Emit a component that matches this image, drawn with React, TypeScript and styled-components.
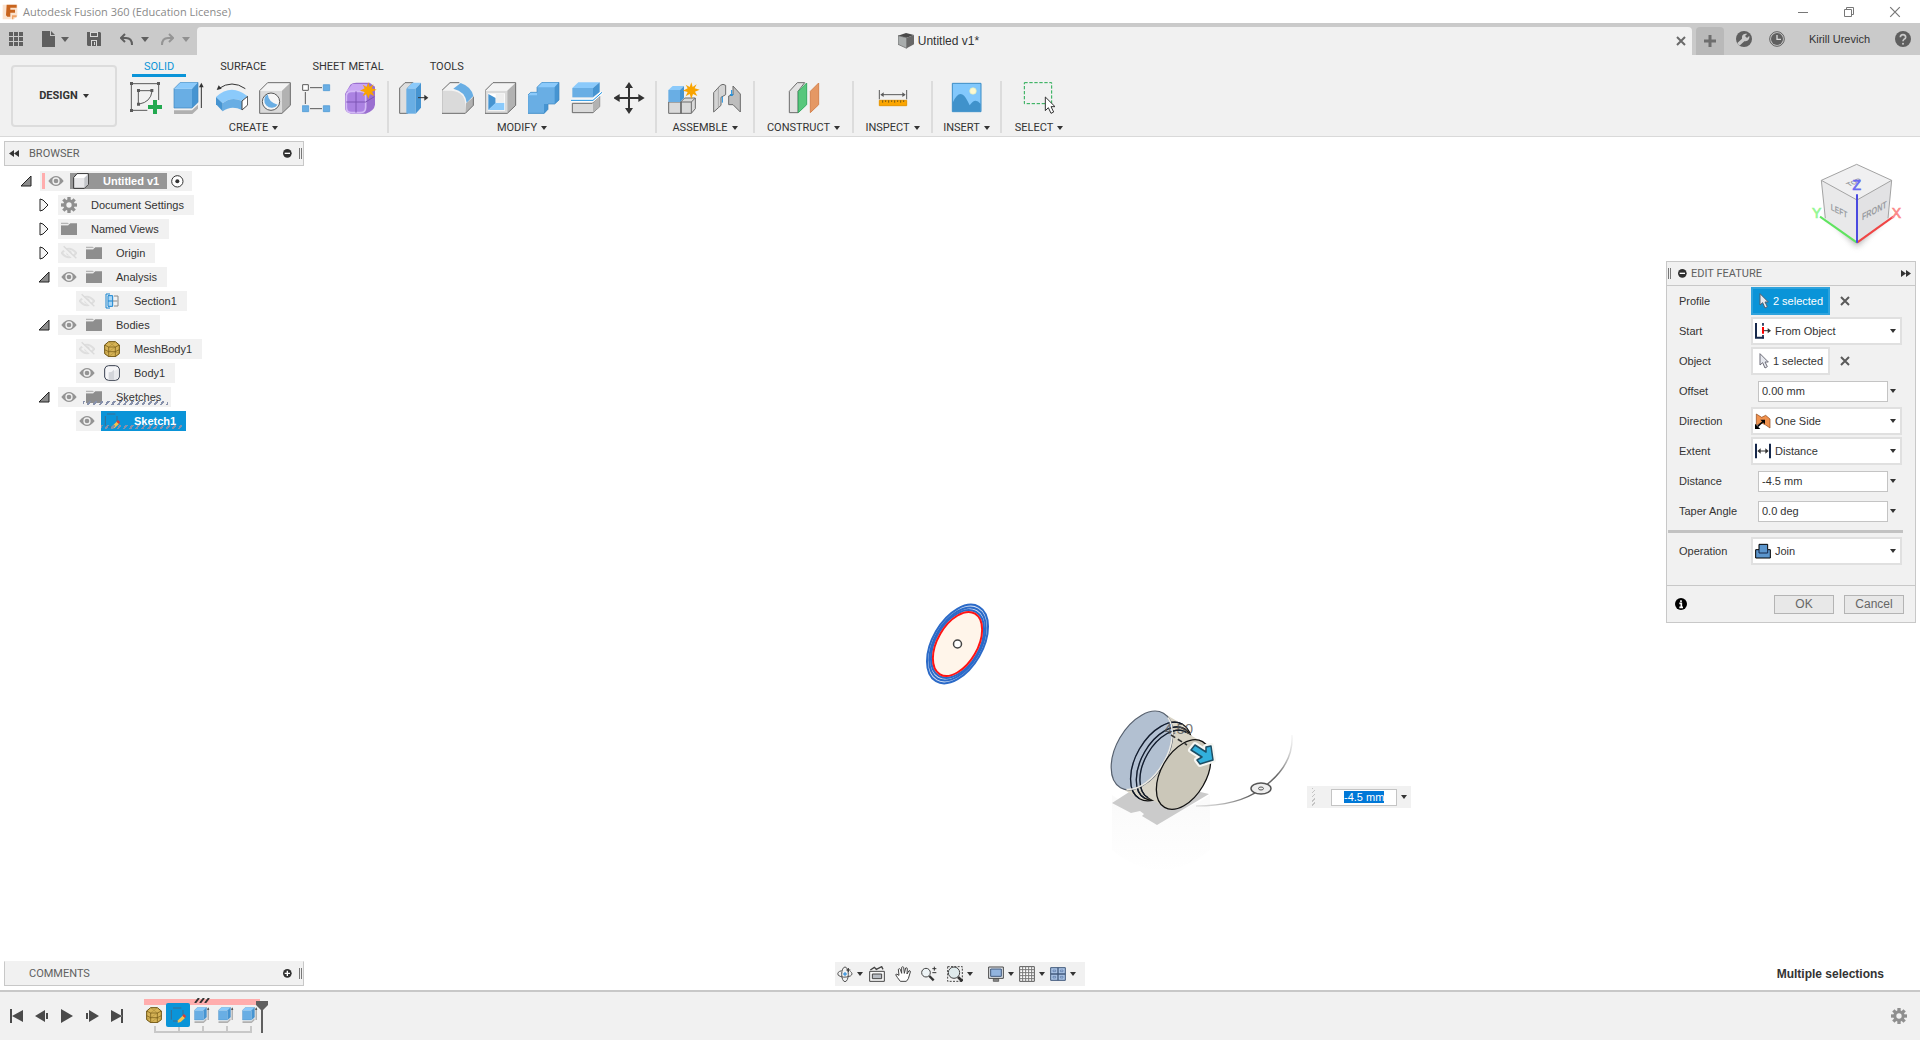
import React, { useEffect, useRef } from "react";
import styled, { createGlobalStyle, css } from "styled-components";

const GlobalStyle = createGlobalStyle`
  *, *::before, *::after { box-sizing: border-box; }
  body {
    margin: 0;
    background: #fff;
    color: #333;
    font-family: "Liberation Sans", Arial, sans-serif;
    font-size: 11px;
    line-height: 16px;
  }
  button, input, select {
    font: inherit;
    color: inherit;
    margin: 0;
  }
  button {
    display: inline-flex;
    align-items: center;
    justify-content: center;
    padding: 0;
    border: 0;
    background: none;
    cursor: pointer;
  }
  svg { display: block; flex: none; }
`;

const Page = styled.div`
  display: flex;
  flex-direction: column;
  min-height: 100vh;
`;

const Caret = styled.span<{ $tone?: string; $small?: boolean }>`
  display: inline-block;
  flex: none;
  border-style: solid;
  border-width: ${(p) => (p.$small ? "4px 3px 0" : "5px 4px 0")};
  border-color: ${(p) => p.$tone ?? "#333"} transparent transparent;
`;

/* ---------- Window title ---------- */

const TitleBar = styled.header`
  display: flex;
  align-items: center;
  height: 23px;
  padding: 0 2px;
  background: #fff;
`;

const AppTitle = styled.h1`
  flex: 1;
  margin: 0 0 0 5px;
  color: #8a8a8a;
  font: 400 11px/16px "Open Sans", "Noto Sans", sans-serif;
`;

const WindowButton = styled.button`
  width: 46px;
  height: 20px;
`;

/* ---------- Tab strip ---------- */

const TabStrip = styled.div`
  display: flex;
  align-items: flex-end;
  height: 32px;
  background: #cacaca;
`;

const QuickBar = styled.div`
  display: flex;
  align-items: center;
  width: 197px;
  height: 32px;
  padding: 0 7px 0 9px;
`;

const QuickButton = styled.button<{ $after: number }>`
  margin-right: ${(p) => p.$after}px;
`;

const DocumentTab = styled.div`
  display: flex;
  flex: 1;
  align-items: center;
  height: 28px;
  padding: 0 6px 0 4px;
  border-radius: 4px 4px 0 0;
  background: #f1f1f1;
`;

const DocumentName = styled.span`
  display: flex;
  flex: 1;
  gap: 4px;
  align-items: center;
  justify-content: center;
  font-size: 12px;
`;

const TabClose = styled.button`
  width: 10px;
  height: 16px;
`;

const NewTab = styled.button`
  width: 28px;
  height: 28px;
  margin: 0 12px 0 4px;
  border-radius: 4px 4px 0 0;
  background: #b9b9b9;
`;

const AccountBar = styled.div`
  display: flex;
  align-items: center;
  height: 32px;
  padding-right: 9px;
`;

const AccountButton = styled.button<{ $after?: number }>`
  margin-right: ${(p) => p.$after ?? 0}px;
`;

/* ---------- Ribbon ---------- */

const Ribbon = styled.div`
  display: flex;
  gap: 3px;
  height: 82px;
  padding-left: 11px;
  border-bottom: 1px solid #d9d9d9;
  background: #f1f1f1;
  font-family: Roboto, "Liberation Sans", sans-serif;
`;

const WorkspaceButton = styled.button`
  gap: 5px;
  width: 106px;
  height: 62px;
  margin-top: 10px;
  border: 2px solid #dcdcdc;
  border-radius: 4px;
  font-weight: 700;
`;

const RibbonMain = styled.div`
  flex: 1;
`;

const RibbonTabs = styled.nav`
  display: flex;
  gap: 22px;
  height: 22px;
  padding-left: 12px;
`;

const RibbonTab = styled.button<{ $active?: boolean }>`
  height: 22px;
  padding: 4px 12px 0;
  border-bottom: 3px solid ${(p) => (p.$active ? "#0a94d8" : "transparent")};
  color: ${(p) => (p.$active ? "#0a94d8" : "#333")};
`;

const ToolGroups = styled.div`
  display: flex;
  padding-top: 4px;
`;

const ToolGroup = styled.section<{ $width: number }>`
  display: flex;
  flex-direction: column;
  gap: 6px;
  align-items: center;
  width: ${(p) => p.$width}px;
  height: 52px;
  border-right: 2px solid #dcdcdc;
  &:last-child { border-right: 0; }
`;

const ToolIcons = styled.div`
  display: flex;
  gap: 11px;
  padding-top: 1px;
`;

const GroupLabel = styled.button`
  gap: 4px;
  height: 16px;
`;

/* ---------- Workspace ---------- */

const Workspace = styled.main`
  position: relative;
  display: flex;
  flex: 1;
  flex-direction: column;
  justify-content: space-between;
  padding: 4px;
`;

const Scene = styled.svg`
  position: absolute;
  inset: 0;
  width: 100%;
  height: 100%;
`;

const UpperArea = styled.div`
  position: relative;
  display: flex;
  justify-content: space-between;
  align-items: flex-start;
  pointer-events: none;
  > * { pointer-events: auto; }
`;

const LowerArea = styled.div`
  position: relative;
  display: grid;
  grid-template-columns: 1fr auto 1fr;
  align-items: end;
`;

const SidePanel = styled.aside`
  width: 300px;
`;

const PanelBar = styled.div<{ $indent: number; $open?: boolean }>`
  display: flex;
  align-items: center;
  width: 300px;
  height: 25px;
  padding: 0 1px 0 ${(p) => p.$indent}px;
  border: 1px solid #c8c8c8;
  ${(p) => p.$open && css`border-top-color: #f1f1f1;`}
  background: #f1f1f1;
`;

const PanelTitle = styled.h2<{ $before?: number }>`
  flex: 1;
  margin: 0 0 0 ${(p) => p.$before ?? 0}px;
  color: #606060;
  font: 400 11px/16px Roboto, "Liberation Sans", sans-serif;
`;

const Grip = styled.span`
  width: 3px;
  height: 11px;
  margin-left: 7px;
  border: solid #777;
  border-width: 0 1px;
`;

const Tree = styled.ul`
  display: flex;
  flex-direction: column;
  gap: 4px;
  margin: 5px 0 0;
  padding: 0;
  list-style: none;
`;

const TreeRow = styled.li<{ $indent: number }>`
  display: flex;
  align-items: center;
  height: 20px;
  padding-left: ${(p) => p.$indent}px;
`;

const TreeToggle = styled.button`
  width: 20px;
  height: 16px;
  justify-content: flex-start;
`;

const TreeLabel = styled.span<{ $hatched?: boolean; $selected?: boolean }>`
  position: relative;
  display: flex;
  align-items: center;
  height: 20px;
  padding: 0 10px 0 3px;
  background: ${(p) => (p.$selected ? "#0a94d8" : "#f1f1f1")};
  ${(p) =>
    p.$selected &&
    css`
      color: #fff;
      font-weight: 700;
    `}
  ${(p) =>
    p.$hatched &&
    css`
      &::after {
        content: "";
        position: absolute;
        right: 3px;
        bottom: 2px;
        left: 0;
        height: 4px;
        background: repeating-linear-gradient(125deg, #8791ab 0 2px, transparent 2px 5px);
      }
    `}
`;

const VisibilityCell = styled.button`
  width: 25px;
  height: 20px;
  padding: 0 6px 0 3px;
  background: #f1f1f1;
`;

const TreeIcon = styled.span`
  width: 16px;
  margin-right: 14px;
`;

const RootRow = styled.span`
  display: flex;
  align-items: center;
  height: 20px;
  padding: 0 8px 0 2px;
  background: #f1f1f1;
`;

const ActiveMark = styled.span`
  width: 3px;
  height: 16px;
  background: #ffadad;
`;

const RootName = styled.span`
  display: flex;
  align-items: center;
  height: 16px;
  margin-right: 4px;
  padding: 0 8px 0 3px;
  background: #969696;
  color: #fff;
  font-weight: 700;
`;

/* ---------- Edit feature dialog ---------- */

const Dock = styled.div`
  display: flex;
  flex-direction: column;
  align-items: flex-end;
  gap: 8px;
  padding-top: 19px;
`;

const CubeHolder = styled.div`
  margin-right: 9px;
`;

const Dialog = styled.section`
  width: 250px;
  border: 1px solid #c8c8c8;
  background: #f1f1f1;
`;

const DialogHeader = styled.div`
  display: flex;
  align-items: center;
  height: 24px;
  padding: 0 4px 0 1px;
  border-bottom: 1px solid #c8c8c8;
`;

const DialogGrip = styled(Grip)`
  margin: 0 7px 0 0;
`;

const Field = styled.div`
  display: grid;
  grid-template-columns: 72px 151px;
  align-items: center;
  height: 30px;
  padding-left: 12px;
`;

const FieldLine = styled.div`
  display: flex;
  align-items: center;
`;

const SelectBox = styled.span`
  display: grid;
  align-items: center;
  height: 28px;
  border: 2px solid #e0e0e0;
  background: #fff;
  > * { grid-area: 1 / 1; }
  > svg { margin-left: 2px; pointer-events: none; }
  > ${Caret} { justify-self: end; margin-right: 4px; pointer-events: none; }
`;

const Select = styled.select`
  width: 100%;
  height: 24px;
  padding: 0 16px 0 22px;
  border: 0;
  background: transparent;
  appearance: none;
`;

const PickButton = styled.button<{ $active?: boolean }>`
  gap: 3px;
  width: 79px;
  height: 28px;
  border: 2px solid ${(p) => (p.$active ? "#2fa3dd" : "#e0e0e0")};
  background: ${(p) => (p.$active ? "#0a94d8" : "#fff")};
  color: ${(p) => (p.$active ? "#fff" : "#333")};
`;

const ClearButton = styled.button`
  width: 16px;
  height: 16px;
  margin-left: 7px;
`;

const ValueInput = styled.input`
  width: 130px;
  height: 21px;
  margin: 0 2px 0 7px;
  padding: 0 3px;
  border: 1px solid #c4c4c4;
  background: #fff;
`;

const Divider = styled.hr`
  height: 3px;
  margin: 4px 12px 3px 1px;
  border: 0;
  background: #c2c2c2;
`;

const DialogFooter = styled.div`
  display: flex;
  gap: 10px;
  align-items: center;
  height: 37px;
  margin-top: 19px;
  padding: 0 11px 0 8px;
  border-top: 1px solid #c8c8c8;
`;

const InfoButton = styled.button`
  margin-right: auto;
`;

const DialogButton = styled.button`
  width: 60px;
  height: 19px;
  border: 1px solid #b4b4b4;
  background: #e8e8e8;
  color: #666;
  font-size: 12px;
`;

/* ---------- Floating value box ---------- */

const FloatingValue = styled.div`
  position: absolute;
  top: 649px;
  left: 1307px;
  display: flex;
  align-items: center;
  height: 22px;
  padding: 0 4px 0 5px;
  background: #f1f1f1;
`;

const DotGrip = styled.span`
  width: 3px;
  height: 18px;
  margin-right: 16px;
  background: repeating-linear-gradient(135deg, #c4c4c4 0 1px, transparent 1px 3px);
`;

const FloatingInput = styled.input`
  width: 66px;
  height: 17px;
  margin-right: 4px;
  padding: 0 0 0 12px;
  border: 1px solid #c4c4c4;
  outline: 0;
  background: #fff;
  line-height: 14px;
  &::selection { background: #0078d7; color: #fff; }
`;

/* ---------- Bottom bars ---------- */

const NavBar = styled.div`
  display: flex;
  align-items: center;
  height: 24px;
  padding: 0 9px 0 2px;
  background: #f1f1f1;
`;

const NavButton = styled.button<{ $after: number }>`
  gap: 4px;
  margin-right: ${(p) => p.$after}px;
`;

const Status = styled.p`
  justify-self: end;
  margin: 0 32px 4px 0;
  font-size: 12px;
  font-weight: 700;
`;

const Timeline = styled.footer`
  display: flex;
  align-items: center;
  height: 50px;
  padding-right: 13px;
  border-top: 2px solid #c8c8c8;
  background: #f1f1f1;
`;

const Playback = styled.div`
  display: flex;
  gap: 9px;
  padding-left: 9px;
`;

const PlayButton = styled.button`
  width: 16px;
  height: 16px;
`;

const Track = styled.div`
  position: relative;
  flex: 1;
  height: 48px;
  margin-left: 17px;
  padding-top: 11px;
`;

const GroupBar = styled.span`
  position: absolute;
  top: 7px;
  left: 2px;
  width: 116px;
  height: 6px;
  background: #ffadad;
`;

const Steps = styled.ol`
  position: relative;
  display: flex;
  margin: 0;
  padding: 0;
  list-style: none;
`;

const Step = styled.li<{ $selected?: boolean }>`
  display: flex;
  align-items: center;
  justify-content: center;
  width: 24px;
  height: 24px;
  border-radius: 2px;
  background: ${(p) => (p.$selected ? "#0a94d8" : "transparent")};
`;

const Bracket = styled.svg`
  margin: -1px 0 0 12px;
`;

const Marker = styled.svg`
  position: absolute;
  top: 9px;
  left: 114px;
`;

const Slashes = styled.svg`
  position: absolute;
  top: 6px;
  left: 52px;
`;

/* ---------- Drawings ---------- */

const ink = "#5a5a5a";

const Icon = ({ box, size, children }: { box: number; size: number; children: React.ReactNode }) => (
  <svg width={size} height={size} viewBox={`0 0 ${box} ${box}`} fill="none" aria-hidden="true">
    {children}
  </svg>
);

const Tool = ({ children }: { children: React.ReactNode }) => (
  <Icon box={96} size={32}>{children}</Icon>
);

const Star = ({ x, y }: { x: number; y: number }) => (
  <path
    transform={`translate(${x} ${y})`}
    fill="#f9a400"
    d="M0-25 4-11 16-19 10-7 25-3 11 3 18 16 5 10 0 24-5 10-17 17-11 4-25 0-11-7-17-18-5-11Z"
  />
);

const CreateSketchIcon = () => (
  <Tool>
    <path d="M4 5H86V54M4 5V85H52" stroke={ink} strokeWidth="3" />
    <path d="M25 26H66M25 26V66M66 28Q62 60 28 66" stroke={ink} strokeWidth="3" />
    <path d="M0 0h9v9H0zM81 0h9v9h-9zM0 81h9v9H0zM21 21h9v9h-9zM61 21h9v9h-9zM21 62h9v9h-9z" fill={ink} />
    <path d="M69 54h12v15h15v12H81v15H69V81H54V69h15Z" fill="#22a94f" />
  </Tool>
);

const ExtrudeShape = () => (
  <>
    <path d="M3 85H57L75 68V80L58 96H3Z" fill="#b0b0b0" />
    <path d="M3 20H57V78H3Z" fill="#69aee4" />
    <path d="M3 20 22 1H75L57 20Z" fill="#8bcafb" />
    <path d="M57 20 75 1V61L57 78Z" fill="#4694d1" />
    <path d="M3 20 22 1H75V61L57 78H3Z" stroke="#3d86c0" strokeWidth="2" />
    <path d="M85 78V12" stroke="#333" strokeWidth="3" />
    <path d="M78 16 85 2 92 16Z" fill="#333" />
  </>
);

const ExtrudeIcon = () => <Tool><ExtrudeShape /></Tool>;

const RevolveIcon = () => (
  <Tool>
    <path d="M8 20Q48-8 88 20" stroke="#333" strokeWidth="3" />
    <path d="M2 24 8 10 17 20Z" fill="#333" />
    <path d="M0 45Q46 3 95 43L78 57Q46 42 20 64Z" fill="#8bcafb" />
    <path d="M20 64Q46 42 78 57V84Q46 68 20 88Z" fill="#69aee4" />
    <path d="M0 45 20 64V88L0 67Z" fill="#4694d1" />
    <path d="M78 57 95 43V69L78 84Z" fill="#fff" stroke="#444" strokeWidth="3" />
  </Tool>
);

const GreyBox = () => (
  <>
    <path d="M2 26H69V94H2Z" fill="#dadada" />
    <path d="M2 26 26 2H94L69 26Z" fill="#f3f3f3" />
    <path d="M69 26 94 2V70L69 94Z" fill="#b2b2b2" />
    <path d="M2 26 26 2H94V70L69 94H2Z" stroke="#6b6b6b" strokeWidth="3" />
  </>
);

const HoleIcon = () => (
  <Tool>
    <GreyBox />
    <circle cx="36" cy="59" r="26" fill="#f6f6f6" stroke={ink} strokeWidth="3" />
    <path d="M26 37Q29 62 56 68A22 22 0 1 1 26 37Z" fill="#69aee4" />
  </Tool>
);

const PatternIcon = () => (
  <Tool>
    <path d="M24 17H60M10 30V66M24 80H60" stroke={ink} strokeWidth="3" />
    <path d="M2 8h17v17H2z" fill="#fff" stroke={ink} strokeWidth="3" />
    <path d="M64 8h19v18H64zM1 71h19v18H1zM64 71h19v18H64z" fill="#69aee4" stroke="#4694d1" strokeWidth="2" />
  </Tool>
);

const FormIcon = () => (
  <Tool>
    <path d="M0 36 16 8Q22 2 34 2H74L90 14V68Q88 86 62 95H18Q0 92 0 76Z" fill="#9a6fd0" />
    <path d="M4 28 22 6H68L60 26Z" fill="#c9a6f3" />
    <path d="M4 42Q4 28 20 28H46Q62 28 62 42V76Q62 92 46 92H20Q4 92 4 76Z" fill="#ab82e2" stroke="#d3b9f6" strokeWidth="5" />
    <path d="M33 28V92M4 60H62L88 44" stroke="#7c55b4" strokeWidth="3" />
    <Star x={70} y={26} />
  </Tool>
);

const PressPullIcon = () => (
  <Tool>
    <path d="M2 18 18 2H42L26 18V94H2Z" fill="#dedede" stroke="#6b6b6b" strokeWidth="3" />
    <path d="M22 20 40 2H65L50 20Z" fill="#8bcafb" />
    <path d="M22 20H50V95H22Z" fill="#69aee4" />
    <path d="M50 20 66 2V77L50 95Z" fill="#4694d1" />
    <path d="M57 47H80" stroke="#333" strokeWidth="3" />
    <path d="M76 38 88 47 76 56Z" fill="#333" />
  </Tool>
);

const FilletIcon = () => (
  <Tool>
    <path d="M-1 26 24 2H45Q60 4 72 16L94 40V70L70 94H-1Z" fill="#f3f3f3" />
    <path d="M-1 26H28Q68 30 70 66V94H-1Z" fill="#dadada" />
    <path d="M72 64 94 46V70L70 94Z" fill="#b2b2b2" />
    <path d="M34 20 56 3Q88 14 94 42L74 62Q70 28 34 20Z" fill="#69aee4" />
    <path d="M-1 94V26L24 2H52M94 44V70L70 94H-1" stroke="#6b6b6b" strokeWidth="3" />
  </Tool>
);

const ShellIcon = () => (
  <Tool>
    <g transform="translate(-2 0)">
      <GreyBox />
      <path d="M10 34H62V86H10Z" fill="#fff" />
      <path d="M12 36 34 48V64L12 84Z" fill="#4694d1" />
      <path d="M12 84 34 62H60V84Z" fill="#8bcafb" />
      <path d="M34 36H60V62H34Z" fill="#efefef" />
    </g>
  </Tool>
);

const CombineIcon = () => (
  <Tool>
    <path d="M-2 40 8 31H27V16L42 1H93V54L80 66H60V82L48 95H-2Z" fill="#69aee4" />
    <path d="M-2 40 8 31H27V40ZM27 16 42 1H93L80 16Z" fill="#8bcafb" />
    <path d="M80 16 93 1V54L80 66ZM48 66H60V82L48 95Z" fill="#4694d1" />
    <path d="M-1 40 8 31H27V16L42 1H93V54L80 66H60V82L48 94H-1Z" stroke="#3d86c0" strokeWidth="2" />
  </Tool>
);

const SplitIcon = () => (
  <Tool>
    <path d="M4 64H64L86 42V74L66 92H4Z" fill="#dadada" stroke="#6b6b6b" strokeWidth="3" />
    <path d="M66 64 86 44V74L66 92Z" fill="#b2b2b2" />
    <path d="M4 18H66V46H4Z" fill="#69aee4" />
    <path d="M4 18 22 1H86L66 18Z" fill="#8bcafb" />
    <path d="M66 18 86 1V30L66 46Z" fill="#4694d1" />
    <path d="M-3 55H66L93 31" stroke="#fff" strokeWidth="9" />
    <path d="M-3 55H66L93 31" stroke="#168ee0" strokeWidth="3" />
  </Tool>
);

const MoveIcon = () => (
  <Tool>
    <path d="M45 12V84M10 48H80" stroke="#333" strokeWidth="6" />
    <path d="M33 18 45 0 57 18ZM33 78 45 96 57 78ZM17 36-2 48 17 60ZM73 36 92 48 73 60Z" fill="#333" />
  </Tool>
);

const NewComponentIcon = () => (
  <Tool>
    <path d="M2 60H40V94H2ZM38 60 50 48H82V80L70 94H38Z" fill="#dadada" stroke="#6b6b6b" strokeWidth="3" />
    <path d="M38 60H70V94M70 60 82 48" stroke="#6b6b6b" strokeWidth="3" />
    <path d="M1 24 14 12H48L36 24Z" fill="#8bcafb" />
    <path d="M1 24H36V60H1Z" fill="#69aee4" />
    <path d="M36 24 48 12V48L36 60Z" fill="#4694d1" />
    <Star x={70} y={26} />
  </Tool>
);

const JointIcon = () => (
  <Tool>
    <path d="M8 32 28 10Q36 4 44 10V38L30 46V70L8 90Z" fill="#d4d4d4" stroke="#6b6b6b" strokeWidth="3" />
    <path d="M22 18V76" stroke="#aaa" strokeWidth="3" />
    <path d="M66 12 88 36V90L66 68H53V42L66 38Z" fill="#bdbdbd" stroke="#6b6b6b" strokeWidth="3" />
    <path d="M34 44V62M62 24V42M57 36 62 42 67 36" stroke="#168ee0" strokeWidth="3" />
  </Tool>
);

const ConstructIcon = () => (
  <Tool>
    <path d="M4 28 28 2H50L30 28V92H4Z" fill="#e2e2e2" stroke="#6b6b6b" strokeWidth="3" />
    <path d="M31 28 56 3V68L31 92Z" fill="#58c77c" stroke="#36ab62" strokeWidth="3" />
    <path d="M67 28 92 3V68L67 92Z" fill="#e59864" stroke="#d58450" strokeWidth="3" />
  </Tool>
);

const MeasureIcon = () => (
  <Tool>
    <path d="M7 24V52M89 24V52M14 38H82" stroke={ink} strokeWidth="3" />
    <path d="M10 38 20 31V45ZM86 38 76 31V45Z" fill={ink} />
    <path d="M7 55H89V71H7Z" fill="#fba500" stroke="#e59500" strokeWidth="3" />
    <path d="M17 55v7M26 55v5M35 55v7M44 55v5M53 55v7M62 55v5M71 55v7M80 55v5" stroke="#7a5a10" strokeWidth="3" />
  </Tool>
);

const InsertIcon = () => (
  <Tool>
    <path d="M4 4H90V89H4Z" fill="#82c8fc" stroke="#3b8dc6" strokeWidth="3" />
    <path d="M5 62Q28 12 50 58L56 70Q72 44 89 66V88H5Z" fill="#4092cb" />
    <circle cx="66" cy="27" r="10" fill="#fdf8cf" stroke="#d5e8c0" strokeWidth="2" />
  </Tool>
);

const SelectIcon = () => (
  <Tool>
    <path d="M4 2H86V65H4Z" stroke="#22a94f" strokeWidth="3" strokeDasharray="10 5" />
    <path d="M67 45V86L76 77 84 94 92 90 84 74H96Z" fill="#fff" stroke="#333" strokeWidth="3" />
  </Tool>
);

const AppLogo = () => (
  <Icon box={48} size={16}>
    <path d="M2 2H46V36L36 46H2Z" fill="#fbe3cf" />
    <path d="M14 2H44V11H25V17H39V26H25V38H16L12 34Z" fill="#c8641e" />
    <path d="M30 34H44V40H34V46H30Z" fill="#f0a468" />
  </Icon>
);

const GridIcon = () => (
  <Icon box={14} size={14}>
    <path d="M0 0h4v4H0zM5 0h4v4H5zM10 0h4v4h-4zM0 5h4v4H0zM5 5h4v4H5zM10 5h4v4h-4zM0 10h4v4H0zM5 10h4v4H5zM10 10h4v4h-4z" fill="#5f5f5f" />
  </Icon>
);

const FileIcon = () => (
  <svg width="13" height="16" viewBox="0 0 13 16" aria-hidden="true">
    <path d="M0 0H8V5H13V16H0ZM9 0 13 4H9Z" fill="#5f5f5f" />
  </svg>
);

const SaveIcon = () => (
  <Icon box={14} size={14}>
    <path d="M0 0H13L14 1V14H1L0 13Z" fill="#5f5f5f" />
    <path d="M3 0H11V5H3ZM4 8H10V14H4Z" fill="#d8d8d8" />
    <path d="M4 1H10V4H4ZM5 9H9V14H5Z" fill="#5f5f5f" />
    <path d="M7 10H8V13H7Z" fill="#d8d8d8" />
  </Icon>
);

const UndoIcon = ({ flip }: { flip?: boolean }) => (
  <svg width="13" height="13" viewBox="0 0 13 13" fill="none" aria-hidden="true">
    <g transform={flip ? "matrix(-1 0 0 1 13 0)" : undefined} stroke={flip ? "#959595" : "#5f5f5f"} strokeWidth="2">
      <path d="M5 1 1 5 5 9M1 5H6Q12 5 12 12" />
    </g>
  </svg>
);

const DocumentIcon = () => (
  <Icon box={48} size={16}>
    <path d="M0 8 24 0 48 6 26 14Z" fill="#4a4a4a" />
    <path d="M0 8 26 14V46L0 34Z" fill="#a9adad" stroke="#5d5d5d" strokeWidth="2" />
    <path d="M26 14 48 6V34L26 46Z" fill="#686868" />
  </Icon>
);

const Cross = ({ size, width, color }: { size: number; width: number; color: string }) => (
  <Icon box={10} size={size}>
    <path d="M1 1 9 9M9 1 1 9" stroke={color} strokeWidth={width} />
  </Icon>
);

const PlusIcon = () => (
  <Icon box={14} size={14}><path d="M7 1V13M1 7H13" stroke="#6e6e6e" strokeWidth="3" /></Icon>
);

const WrenchIcon = () => (
  <Icon box={48} size={16}>
    <circle cx="24" cy="24" r="24" fill="#5f5f5f" />
    <path d="M8 42 4 36 18 23Q16 10 28 8L34 8 27 15 33 21 40 14Q42 28 28 31H25L12 43Z" fill="#cacaca" />
  </Icon>
);

const ClockIcon = () => (
  <Icon box={48} size={16}>
    <circle cx="24" cy="24" r="22" stroke="#5f5f5f" strokeWidth="3" />
    <circle cx="24" cy="24" r="18" fill="#5f5f5f" />
    <path d="M24 12V25H36" stroke="#d8d8d8" strokeWidth="4" />
  </Icon>
);

const HelpIcon = () => (
  <Icon box={48} size={16}>
    <circle cx="24" cy="24" r="24" fill="#5f5f5f" />
    <path d="M16 19Q16 11 24 11T32 19Q32 23 27 25Q24 27 24 31" stroke="#cacaca" strokeWidth="5" />
    <circle cx="24" cy="38" r="3" fill="#cacaca" />
  </Icon>
);

const DoubleArrow = ({ back }: { back?: boolean }) => (
  <svg width="10" height="7" viewBox="0 0 20 14" aria-hidden="true">
    <path d={back ? "M10 0V14L0 7ZM20 0V14L10 7Z" : "M0 0 10 7 0 14ZM10 0 20 7 10 14Z"} fill="#333" />
  </svg>
);

const RoundSign = ({ plus }: { plus?: boolean }) => (
  <Icon box={27} size={9}>
    <circle cx="13" cy="13" r="13" fill="#2f2f2f" />
    <path d={plus ? "M5 13H21M13 5V21" : "M5 13H21"} stroke="#fff" strokeWidth="4" />
  </Icon>
);

const EyeIcon = () => (
  <Icon box={48} size={16}>
    <path d="M1 24Q24-6 47 24Q24 54 1 24Z" fill="#949494" />
    <circle cx="24" cy="24" r="9" stroke="#f1f1f1" strokeWidth="4" />
  </Icon>
);

const EyeOffIcon = () => (
  <Icon box={48} size={16}>
    <path d="M2 24Q24-2 46 24Q24 50 2 24Z" stroke="#dedede" strokeWidth="6" />
    <circle cx="24" cy="24" r="8" fill="#dedede" />
    <path d="M4 6 42 42" stroke="#f1f1f1" strokeWidth="9" />
    <path d="M8 4 46 40" stroke="#dadada" strokeWidth="4" />
  </Icon>
);

const GearIcon = () => (
  <Icon box={48} size={16}>
    <g fill="#8f8f8f">
      {[0, 45, 90, 135].map((a) => (
        <rect key={a} x="19" y="0" width="10" height="48" transform={`rotate(${a} 24 24)`} />
      ))}
      <circle cx="24" cy="24" r="17" />
    </g>
    <circle cx="24" cy="24" r="8" fill="#f1f1f1" />
  </Icon>
);

const FolderIcon = () => (
  <Icon box={48} size={16}>
    <path d="M0 5H20L24 9H0Z" fill="#b5b5b5" />
    <path d="M0 12H22L28 7H48V42H0Z" fill="#8e8e8e" />
    <path d="M0 13H22" stroke="#d5d5d5" strokeWidth="2" />
  </Icon>
);

const RootCubeIcon = () => (
  <Icon box={48} size={16}>
    <path d="M2 14 12 2H46V34L34 46H2Z" fill="#e8e8ea" stroke="#333" strokeWidth="3" strokeLinejoin="round" />
    <path d="M3 15 13 4H44L34 15Z" fill="#fff" />
    <path d="M34 15 44 5V34L34 44Z" fill="#c4c6ca" />
  </Icon>
);

const SectionIcon = () => (
  <Icon box={48} size={16}>
    <path d="M18 3H6V45H18" stroke="#1583d0" strokeWidth="3" />
    <path d="M12 8H26V40H12Z" fill="#a9d6f6" stroke="#1583d0" strokeWidth="3" />
    <path d="M12 24H26" stroke="#1583d0" strokeWidth="3" />
    <path d="M26 24H40M30 9H42V39H30" stroke="#8a8a8a" strokeWidth="3" />
  </Icon>
);

const MeshIcon = () => (
  <Icon box={48} size={16}>
    <path d="M2 12 14 2H34L46 12V38L34 47H14L2 38Z" fill="#d6b356" stroke="#6c5210" strokeWidth="3" />
    <path d="M2 12 14 18H34L46 12M14 18V47M34 18V47M2 26 14 32H34L46 26" stroke="#6c5210" strokeWidth="2" />
    <path d="M14 2 34 18M34 2 14 18M14 32 34 18M14 47 34 32M2 38 14 32M46 38 34 32" stroke="#8d6f22" strokeWidth="1" />
  </Icon>
);

const BodyIcon = () => (
  <Icon box={48} size={16}>
    <path d="M2 12Q4 2 14 2H34Q44 2 46 12V36Q44 46 34 46H14Q4 46 2 36Z" fill="#f6f6f8" stroke="#3a4150" strokeWidth="3" />
    <path d="M14 22Q24 22 30 14V44H14Z" fill="#d3d5da" />
    <path d="M30 18Q38 16 44 10V36Q40 44 30 44Z" fill="#e9eaed" />
  </Icon>
);

const SketchIcon = () => (
  <Icon box={48} size={16}>
    <path d="M9 3H34M39 9V24M4 9V38M9 42H24" stroke="#3d6c90" strokeWidth="3" />
    <path d="M24 40 38 26 45 33 32 45 23 47Z" fill="#f6c24c" />
    <path d="M37 26 42 21 48 27 45 33Z" fill="#e23b2e" />
  </Icon>
);

const SmallExtrude = () => (
  <svg width="16" height="16" viewBox="0 0 96 96" fill="none" aria-hidden="true"><ExtrudeShape /></svg>
);

const OpenToggle = () => (
  <svg width="12" height="12" viewBox="0 0 12 12" aria-hidden="true">
    <path d="M1 11 11 1V11Z" fill="#8c8c8c" stroke="#222" strokeWidth="1" />
  </svg>
);

const ClosedToggle = () => (
  <svg width="12" height="14" viewBox="0 0 12 14" aria-hidden="true">
    <path d="M2 1V13L5 12 10 7 5 2Z" fill="#f4f4f4" stroke="#222" strokeWidth="1" />
  </svg>
);

const RadioMark = () => (
  <Icon box={39} size={13}>
    <circle cx="19" cy="19" r="17" fill="#fff" stroke="#333" strokeWidth="3" />
    <circle cx="19" cy="19" r="6" fill="#333" />
  </Icon>
);

const PointerIcon = ({ light }: { light?: boolean }) => (
  <svg width="12" height="16" viewBox="0 0 36 48" aria-hidden="true">
    <path d="M6 2V36L14 29 21 45 28 41 21 27H31Z" fill="#e6e8ee" stroke={light ? "#53606f" : "#6d6d78"} strokeWidth="3" />
  </svg>
);

const FromObjectIcon = () => (
  <Icon box={48} size={16}>
    <path d="M3 0V44H27" stroke="#16284b" strokeWidth="6" />
    <path d="M24 0V8M24 36V46" stroke="#16284b" strokeWidth="5" />
    <path d="M24 12V32" stroke="#f00" strokeWidth="6" />
    <path d="M26 23H40" stroke="#333" strokeWidth="3" />
    <path d="M38 15 48 23 38 31Z" fill="#333" />
  </Icon>
);

const OneSideIcon = () => (
  <Icon box={48} size={16}>
    <path d="M4 3 20 13 32 7 45 18V45L32 36 20 30 4 36Z" fill="#f0924e" stroke="#8a4417" strokeWidth="2" />
    <path d="M8 40 26 24" stroke="#000" strokeWidth="5" />
    <path d="M0 48V32L16 48ZM16 20H30V34Z" fill="#000" />
  </Icon>
);

const DistanceIcon = () => (
  <Icon box={48} size={16}>
    <path d="M3 2V46M45 2V46" stroke="#16284b" strokeWidth="6" />
    <path d="M12 24H36" stroke="#333" strokeWidth="3" />
    <path d="M7 24 17 16V32ZM41 24 31 16V32Z" fill="#333" />
  </Icon>
);

const JoinIcon = () => (
  <Icon box={48} size={16}>
    <path d="M2 20H12V4H38V20H46V45H2Z" fill="#5b95cc" stroke="#000" strokeWidth="3" />
    <path d="M12 20V30H38V20" stroke="#16284b" strokeWidth="3" />
  </Icon>
);

const InfoIcon = () => (
  <Icon box={36} size={12}>
    <circle cx="18" cy="18" r="18" fill="#000" />
    <path d="M18 7V12M13 16H19V27M13 28H24" stroke="#fff" strokeWidth="5" />
  </Icon>
);

const OrbitIcon = () => (
  <Icon box={48} size={16}>
    <ellipse cx="24" cy="25" rx="10" ry="22" stroke="#555" strokeWidth="3" />
    <path d="M14 14Q-2 18 4 28Q18 38 40 30Q50 24 40 16" stroke="#555" strokeWidth="3" />
    <path d="M24 18V30M18 24H30" stroke="#1681d8" strokeWidth="3" />
    <path d="M34 6V18M28 12H40" stroke="#333" strokeWidth="3" />
  </Icon>
);

const LookAtIcon = () => (
  <Icon box={48} size={16}>
    <path d="M2 16H46V46H2Z" fill="#fafafa" stroke="#444" strokeWidth="3" />
    <path d="M10 24H38V38H10Z" fill="#b8bcc2" stroke="#444" strokeWidth="3" />
    <path d="M4 12 16 4 22 10 38 2 42 10" stroke="#444" strokeWidth="4" />
  </Icon>
);

const HandIcon = () => (
  <Icon box={48} size={16}>
    <path d="M16 46Q6 34 2 26Q4 22 12 28L10 10Q14 6 16 10L20 22V4Q24 0 26 4L28 22 32 6Q37 4 37 8L36 24 42 14Q47 14 46 18L40 38 34 46Z" fill="#fff" stroke="#444" strokeWidth="3" />
  </Icon>
);

const ZoomIcon = () => (
  <Icon box={48} size={16}>
    <circle cx="15" cy="20" r="13" fill="#eef4f6" stroke="#444" strokeWidth="3" />
    <path d="M25 30 38 43" stroke="#333" strokeWidth="7" />
    <path d="M40 2V14M34 8H46M34 20H46" stroke="#333" strokeWidth="3" />
  </Icon>
);

const ZoomWindowIcon = () => (
  <Icon box={48} size={16}>
    <path d="M2 2H46V46H2Z" stroke="#444" strokeWidth="3" strokeDasharray="6 4" />
    <circle cx="21" cy="20" r="17" fill="#dfeaec" stroke="#444" strokeWidth="3" />
    <path d="M33 33 46 46" stroke="#333" strokeWidth="8" />
  </Icon>
);

const DisplayIcon = () => (
  <Icon box={48} size={16}>
    <path d="M2 3H46V37H2Z" fill="#e9edf2" stroke="#444" strokeWidth="3" />
    <path d="M8 9H40V31H8Z" fill="#92b4df" stroke="#41597c" strokeWidth="3" />
    <path d="M16 38H32V46H16Z" fill="#8a8a8a" stroke="#444" strokeWidth="2" />
  </Icon>
);

const GridDisplayIcon = () => (
  <Icon box={48} size={16}>
    <path d="M2 2H46V46H2Z" fill="#fff" stroke="#555" strokeWidth="3" />
    <path d="M11 2V46M20 2V46M29 2V46M38 2V46M2 11H46M2 20H46M2 29H46M2 38H46" stroke="#777" strokeWidth="3" />
  </Icon>
);

const ViewportIcon = () => (
  <Icon box={48} size={16}>
    <path d="M2 5H46V43H2Z" fill="#a9c2e4" stroke="#41597c" strokeWidth="3" />
    <path d="M24 5V43M2 24H46" stroke="#41597c" strokeWidth="4" />
    <path d="M9 12H17V17H9ZM31 12H39V17H31ZM9 31H17V36H9ZM31 31H39V36H31Z" stroke="#5876a3" strokeWidth="2" />
  </Icon>
);

const ViewCube = () => (
  <svg width="97" height="93" viewBox="510 480 291 279" fill="none" role="img" aria-label="View cube">
    <defs>
      <filter id="cubeShadow" x="-30%" y="-30%" width="160%" height="160%">
        <feGaussianBlur stdDeviation="9" />
      </filter>
    </defs>
    <path d="M555 640 651 740 748 640Z" fill="#777" opacity="0.6" filter="url(#cubeShadow)" />
    <path d="M650 493 755 541 651 600 544 541Z" fill="#f0f0f1" />
    <path d="M544 541 651 600V728L556 655Z" fill="#e9e9ea" />
    <path d="M755 541 651 600V728L744 655Z" fill="#e2e2e4" />
    <path d="M650 493 755 541 651 600 544 541ZM544 541 556 655M755 541 744 655M651 600V728" stroke="#a3a3a3" strokeWidth="3" />
    <g fill="#9a9da2" fontFamily="Liberation Sans, sans-serif" fontWeight="700" textAnchor="middle">
      <text transform="matrix(0.8 0.4 0 1.1 597 642)" fontSize="25">LEFT</text>
      <text transform="matrix(0.8 -0.42 0 1.1 703 642)" fontSize="27">FRONT</text>
      <text transform="matrix(0.7 -0.3 0.6 0.5 648 552)" fontSize="28">TOP</text>
    </g>
    <path d="M540 650 651 728" stroke="#5fe45f" strokeWidth="6" />
    <path d="M651 728 760 650" stroke="#f04545" strokeWidth="6" />
    <path d="M651 728V583" stroke="#4a4ae0" strokeWidth="6" />
    <g fontFamily="Liberation Sans, sans-serif" fontSize="42" textAnchor="middle" strokeWidth="2">
      <text x="650" y="571" fill="#6a6af0" stroke="#6a6af0">Z</text>
      <text x="530" y="654" fill="#93f793" stroke="#93f793">Y</text>
      <text x="769" y="654" fill="#fb8888" stroke="#fb8888">X</text>
    </g>
  </svg>
);

const Viewport = () => (
  <Scene fill="none" role="img" aria-label="Model view">
    <defs>
      <linearGradient id="arcFade" x1="1196" y1="806" x2="1292" y2="735" gradientUnits="userSpaceOnUse">
        <stop offset="0" stopColor="#aaa" stopOpacity="0.3" />
        <stop offset="0.4" stopColor="#666" />
        <stop offset="0.7" stopColor="#666" />
        <stop offset="1" stopColor="#aaa" stopOpacity="0.1" />
      </linearGradient>
      <linearGradient id="reflection" x1="0" y1="800" x2="0" y2="875" gradientUnits="userSpaceOnUse">
        <stop offset="0" stopColor="#fafafa" />
        <stop offset="1" stopColor="#fff" />
      </linearGradient>
    </defs>
    <g transform="translate(0 -137)">
      <g transform="translate(957.5 644) rotate(30)">
        <ellipse rx="25" ry="43" fill="#d5e1f4" stroke="#2b6ac8" strokeWidth="2" />
        <ellipse rx="23" ry="40" stroke="#2b6ac8" strokeWidth="2" />
        <ellipse rx="22" ry="37" stroke="#2b6ac8" strokeWidth="2" />
        <ellipse rx="20" ry="35" fill="#fff5ea" stroke="#ff1414" strokeWidth="2" />
      </g>
      <circle cx="957.5" cy="644" r="4" fill="#fff" stroke="#444" strokeWidth="1.5" />

      <path d="M1112 795Q1160 830 1210 795V850Q1160 890 1112 850Z" fill="url(#reflection)" />
      <path d="M1112 803 1148 780 1209 794 1157 825 1142 816 1144 814 1140 811 1131 813Z" fill="#cbcbcb" />
      <g transform="translate(1142 750.5) rotate(30)">
        <path d="M0-43H22V43H0A25 43 0 0 1 0-43Z" fill="#d8d3c5" />
        <ellipse cx="22" rx="25" ry="43" fill="#dcd8cb" stroke="#111" strokeWidth="1.3" />
        <ellipse cx="26" rx="23" ry="40" fill="#cfcabc" stroke="#111" strokeWidth="1.3" />
        <ellipse cx="29" rx="22.5" ry="38" fill="#d8d4c7" stroke="#111" strokeWidth="1.3" />
        <path d="M29-37.6H48V37.6H29Z" fill="#d8d4c7" />
        <ellipse rx="25.5" ry="43" fill="#a3b8d6" fillOpacity="0.72" stroke="#56606e" strokeWidth="1.2" />
        <path d="M22-43A25 43 0 0 0 22 43M29-38A22.5 38 0 0 0 29 38M26-40A23 40 0 0 0 26 40" stroke="#111b2c" strokeWidth="1.3" />
        <path d="M6-41.500A25.5 43 0 0 1 6 41.500" stroke="#eceae4" strokeWidth="1.500" />
        <ellipse cx="48" rx="22.5" ry="38" fill="#cbc7b9" stroke="#111" strokeWidth="1.3" />
      </g>
      <text x="1164" y="734" fill="#555" fillOpacity="0.8" fontSize="15">4.50</text>
      <path d="M1171 735 1187 745" stroke="#333" strokeWidth="1.5" strokeDasharray="5 3" />
      <g strokeLinejoin="round">
        <path d="M1195 745 1206 752 1206 747 1211 746 1213 760 1200 764 1197 760 1202 757 1191 750Z" stroke="#f6f6f2" strokeWidth="6" />
        <path d="M1195 745 1206 752 1206 747 1211 746 1213 760 1200 764 1197 760 1202 757 1191 750Z" fill="#32b0dc" stroke="#1d4d63" strokeWidth="1.5" />
      </g>
      <path d="M1196 806Q1238 806 1261 789Q1294 766 1292 735" stroke="url(#arcFade)" strokeWidth="1.5" />
      <ellipse cx="1261" cy="788.5" rx="10" ry="5.5" fill="#eee" stroke="#555" strokeWidth="1.5" />
      <ellipse cx="1261" cy="788.5" rx="2.5" ry="1.5" stroke="#555" />
    </g>
  </Scene>
);

/* ---------- Data ---------- */

const groups = [
  { label: "CREATE", width: 269, icons: [CreateSketchIcon, ExtrudeIcon, RevolveIcon, HoleIcon, PatternIcon, FormIcon] },
  { label: "MODIFY", width: 268, icons: [PressPullIcon, FilletIcon, ShellIcon, CombineIcon, SplitIcon, MoveIcon] },
  { label: "ASSEMBLE", width: 98, icons: [NewComponentIcon, JointIcon] },
  { label: "CONSTRUCT", width: 99, icons: [ConstructIcon] },
  { label: "INSPECT", width: 79, icons: [MeasureIcon] },
  { label: "INSERT", width: 69, icons: [InsertIcon] },
  { label: "SELECT", width: 74, icons: [SelectIcon] },
];

type Node = {
  name: string;
  level: 1 | 2;
  open?: boolean;
  eye?: "on" | "off";
  icon: React.FC;
  hatched?: boolean;
  selected?: boolean;
};

const nodes: Node[] = [
  { name: "Document Settings", level: 1, open: false, icon: GearIcon },
  { name: "Named Views", level: 1, open: false, icon: FolderIcon },
  { name: "Origin", level: 1, open: false, eye: "off", icon: FolderIcon },
  { name: "Analysis", level: 1, open: true, eye: "on", icon: FolderIcon },
  { name: "Section1", level: 2, eye: "off", icon: SectionIcon },
  { name: "Bodies", level: 1, open: true, eye: "on", icon: FolderIcon },
  { name: "MeshBody1", level: 2, eye: "off", icon: MeshIcon },
  { name: "Body1", level: 2, eye: "on", icon: BodyIcon },
  { name: "Sketches", level: 1, open: true, eye: "on", icon: FolderIcon, hatched: true },
  { name: "Sketch1", level: 2, eye: "on", icon: SketchIcon, hatched: true, selected: true },
];

const playback = [
  { name: "Go to start", d: "M1 1H3V15H1ZM14 2V14L3 8Z" },
  { name: "Step back", d: "M11 2V14L1 8ZM12 5H14V11H12Z" },
  { name: "Play", d: "M2 1V15L14 8Z" },
  { name: "Step forward", d: "M2 5H4V11H2ZM5 2V14L15 8Z" },
  { name: "Go to end", d: "M2 2V14L13 8ZM12 1H14V15H12Z" },
];

const navItems = [
  { name: "Orbit", icon: OrbitIcon, caret: true, after: 6 },
  { name: "Look at", icon: LookAtIcon, after: 10 },
  { name: "Pan", icon: HandIcon, after: 10 },
  { name: "Zoom", icon: ZoomIcon, after: 10 },
  { name: "Zoom window", icon: ZoomWindowIcon, caret: true, after: 15 },
  { name: "Display settings", icon: DisplayIcon, caret: true, after: 5 },
  { name: "Grid and snaps", icon: GridDisplayIcon, caret: true, after: 5 },
  { name: "Viewports", icon: ViewportIcon, caret: true, after: 0 },
];

/* ---------- Parts ---------- */

const SelectField = ({ id, label, value, icon: Glyph }: { id: string; label: string; value: string; icon: React.FC }) => (
  <Field>
    <label htmlFor={id}>{label}</label>
    <SelectBox>
      <Glyph />
      <Select id={id} defaultValue={value}>
        <option>{value}</option>
      </Select>
      <Caret $small />
    </SelectBox>
  </Field>
);

const PickField = ({ id, label, text, active }: { id: string; label: string; text: string; active?: boolean }) => (
  <Field>
    <label htmlFor={id}>{label}</label>
    <FieldLine>
      <PickButton id={id} $active={active}>
        <PointerIcon light={active} />
        {text}
      </PickButton>
      <ClearButton aria-label={`Clear ${label}`}>
        <Cross size={10} width={2} color="#5a5a5a" />
      </ClearButton>
    </FieldLine>
  </Field>
);

const ValueField = ({ id, label, value }: { id: string; label: string; value: string }) => (
  <Field>
    <label htmlFor={id}>{label}</label>
    <FieldLine>
      <ValueInput id={id} defaultValue={value} />
      <button aria-label={`${label} options`}><Caret $small /></button>
    </FieldLine>
  </Field>
);

const TreeNode = ({ node }: { node: Node }) => {
  const Glyph = node.icon;
  return (
    <TreeRow $indent={node.level === 1 ? 34 : 72}>
      {node.level === 1 && (
        <TreeToggle aria-label={`Toggle ${node.name}`} aria-expanded={node.open}>
          {node.open ? <OpenToggle /> : <ClosedToggle />}
        </TreeToggle>
      )}
      {node.eye && (
        <VisibilityCell aria-label={`Visibility of ${node.name}`}>
          {node.eye === "on" ? <EyeIcon /> : <EyeOffIcon />}
        </VisibilityCell>
      )}
      <TreeLabel $hatched={node.hatched} $selected={node.selected}>
        <TreeIcon><Glyph /></TreeIcon>
        {node.name}
      </TreeLabel>
    </TreeRow>
  );
};

export default function App() {
  const valueRef = useRef<HTMLInputElement>(null);
  useEffect(() => {
    valueRef.current?.focus();
    valueRef.current?.select();
  }, []);

  return (
    <Page>
      <GlobalStyle />
      <TitleBar>
        <AppLogo />
        <AppTitle>Autodesk Fusion 360 (Education License)</AppTitle>
        <WindowButton aria-label="Minimize">
          <Icon box={20} size={10}><path d="M0 11H20" stroke="#777" strokeWidth="2" /></Icon>
        </WindowButton>
        <WindowButton aria-label="Restore">
          <Icon box={20} size={10}>
            <path d="M1 5H15V19H1ZM5 5V1H19V15H15" stroke="#777" strokeWidth="2" />
          </Icon>
        </WindowButton>
        <WindowButton aria-label="Close"><Cross size={12} width={1} color="#777" /></WindowButton>
      </TitleBar>

      <TabStrip>
        <QuickBar>
          <QuickButton $after={19} aria-label="Data panel"><GridIcon /></QuickButton>
          <QuickButton $after={6} aria-label="File"><FileIcon /></QuickButton>
          <QuickButton $after={18} aria-label="File menu"><Caret $tone="#5f5f5f" /></QuickButton>
          <QuickButton $after={19} aria-label="Save"><SaveIcon /></QuickButton>
          <QuickButton $after={8} aria-label="Undo"><UndoIcon /></QuickButton>
          <QuickButton $after={12} aria-label="Undo history"><Caret $tone="#5f5f5f" /></QuickButton>
          <QuickButton $after={8} aria-label="Redo"><UndoIcon flip /></QuickButton>
          <QuickButton $after={0} aria-label="Redo history"><Caret $tone="#909090" /></QuickButton>
        </QuickBar>
        <DocumentTab>
          <DocumentName><DocumentIcon />Untitled v1*</DocumentName>
          <TabClose aria-label="Close tab"><Cross size={10} width={2} color="#6a6a6a" /></TabClose>
        </DocumentTab>
        <NewTab aria-label="New tab"><PlusIcon /></NewTab>
        <AccountBar>
          <AccountButton $after={17} aria-label="Extensions"><WrenchIcon /></AccountButton>
          <AccountButton $after={24} aria-label="Job status"><ClockIcon /></AccountButton>
          <AccountButton $after={25}>Kirill Urevich</AccountButton>
          <AccountButton aria-label="Help"><HelpIcon /></AccountButton>
        </AccountBar>
      </TabStrip>

      <Ribbon>
        <WorkspaceButton>DESIGN <Caret $small /></WorkspaceButton>
        <RibbonMain>
          <RibbonTabs>
            <RibbonTab $active>SOLID</RibbonTab>
            <RibbonTab>SURFACE</RibbonTab>
            <RibbonTab>SHEET METAL</RibbonTab>
            <RibbonTab>TOOLS</RibbonTab>
          </RibbonTabs>
          <ToolGroups>
            {groups.map((g) => (
              <ToolGroup key={g.label} $width={g.width}>
                <ToolIcons>
                  {g.icons.map((Glyph, i) => (
                    <button key={i} aria-label={`${g.label} ${i + 1}`}><Glyph /></button>
                  ))}
                </ToolIcons>
                <GroupLabel>{g.label}<Caret $small /></GroupLabel>
              </ToolGroup>
            ))}
          </ToolGroups>
        </RibbonMain>
      </Ribbon>

      <Workspace>
        <Viewport />
        <FloatingValue>
          <DotGrip />
          <FloatingInput ref={valueRef} aria-label="Distance value" defaultValue="-4.5 mm" />
          <button aria-label="Distance value options"><Caret $small /></button>
        </FloatingValue>

        <UpperArea>
          <SidePanel>
            <PanelBar $indent={4}>
              <DoubleArrow back />
              <PanelTitle $before={10}>BROWSER</PanelTitle>
              <button aria-label="Collapse browser"><RoundSign /></button>
              <Grip />
            </PanelBar>
            <Tree>
              <TreeRow $indent={16}>
                <TreeToggle aria-label="Toggle Untitled v1" aria-expanded><OpenToggle /></TreeToggle>
                <RootRow>
                  <ActiveMark />
                  <VisibilityCell aria-label="Visibility of Untitled v1"><EyeIcon /></VisibilityCell>
                  <RootName><TreeIcon><RootCubeIcon /></TreeIcon>Untitled v1</RootName>
                  <RadioMark />
                </RootRow>
              </TreeRow>
              {nodes.map((n) => <TreeNode key={n.name} node={n} />)}
            </Tree>
          </SidePanel>

          <Dock>
            <CubeHolder><ViewCube /></CubeHolder>
            <Dialog>
              <DialogHeader>
                <DialogGrip />
                <RoundSign />
                <PanelTitle $before={4}>EDIT FEATURE</PanelTitle>
                <DoubleArrow />
              </DialogHeader>
              <PickField id="profile" label="Profile" text="2 selected" active />
              <SelectField id="start" label="Start" value="From Object" icon={FromObjectIcon} />
              <PickField id="object" label="Object" text="1 selected" />
              <ValueField id="offset" label="Offset" value="0.00 mm" />
              <SelectField id="direction" label="Direction" value="One Side" icon={OneSideIcon} />
              <SelectField id="extent" label="Extent" value="Distance" icon={DistanceIcon} />
              <ValueField id="distance" label="Distance" value="-4.5 mm" />
              <ValueField id="taper" label="Taper Angle" value="0.0 deg" />
              <Divider />
              <SelectField id="operation" label="Operation" value="Join" icon={JoinIcon} />
              <DialogFooter>
                <InfoButton aria-label="Info"><InfoIcon /></InfoButton>
                <DialogButton>OK</DialogButton>
                <DialogButton>Cancel</DialogButton>
              </DialogFooter>
            </Dialog>
          </Dock>
        </UpperArea>

        <LowerArea>
          <PanelBar $indent={24} $open>
            <PanelTitle>COMMENTS</PanelTitle>
            <button aria-label="Expand comments"><RoundSign plus /></button>
            <Grip />
          </PanelBar>
          <NavBar>
            {navItems.map(({ name, icon: Glyph, caret, after }) => (
              <NavButton key={name} $after={after} aria-label={name}>
                <Glyph />
                {caret && <Caret $small />}
              </NavButton>
            ))}
          </NavBar>
          <Status>Multiple selections</Status>
        </LowerArea>
      </Workspace>

      <Timeline>
        <Playback>
          {playback.map((p) => (
            <PlayButton key={p.name} aria-label={p.name}>
              <Icon box={16} size={16}><path d={p.d} fill="#4a4a4a" /></Icon>
            </PlayButton>
          ))}
        </Playback>
        <Track>
          <GroupBar />
          <Steps>
            <Step><MeshIcon /></Step>
            <Step $selected><SketchIcon /></Step>
            <Step><SmallExtrude /></Step>
            <Step><SmallExtrude /></Step>
            <Step><SmallExtrude /></Step>
          </Steps>
          <Bracket width="98" height="8" viewBox="0 0 98 8" fill="none" aria-hidden="true">
            <path d="M1 0V6H97V0M25 1V6M49 0V6M73 0V6" stroke="#c8c8c8" strokeWidth="2" />
          </Bracket>
          <Slashes width="16" height="5" viewBox="0 0 16 5" fill="none" aria-hidden="true">
            <path d="M1 5 5 0M6 5 10 0M11 5 15 0" stroke="#333" strokeWidth="2" />
          </Slashes>
          <Marker width="12" height="32" viewBox="0 0 12 32" aria-hidden="true">
            <path d="M0 0H12V4L7 9V32H5V9L0 4Z" fill="#5f5f5f" />
          </Marker>
        </Track>
        <button aria-label="Timeline settings"><GearIcon /></button>
      </Timeline>
    </Page>
  );
}
